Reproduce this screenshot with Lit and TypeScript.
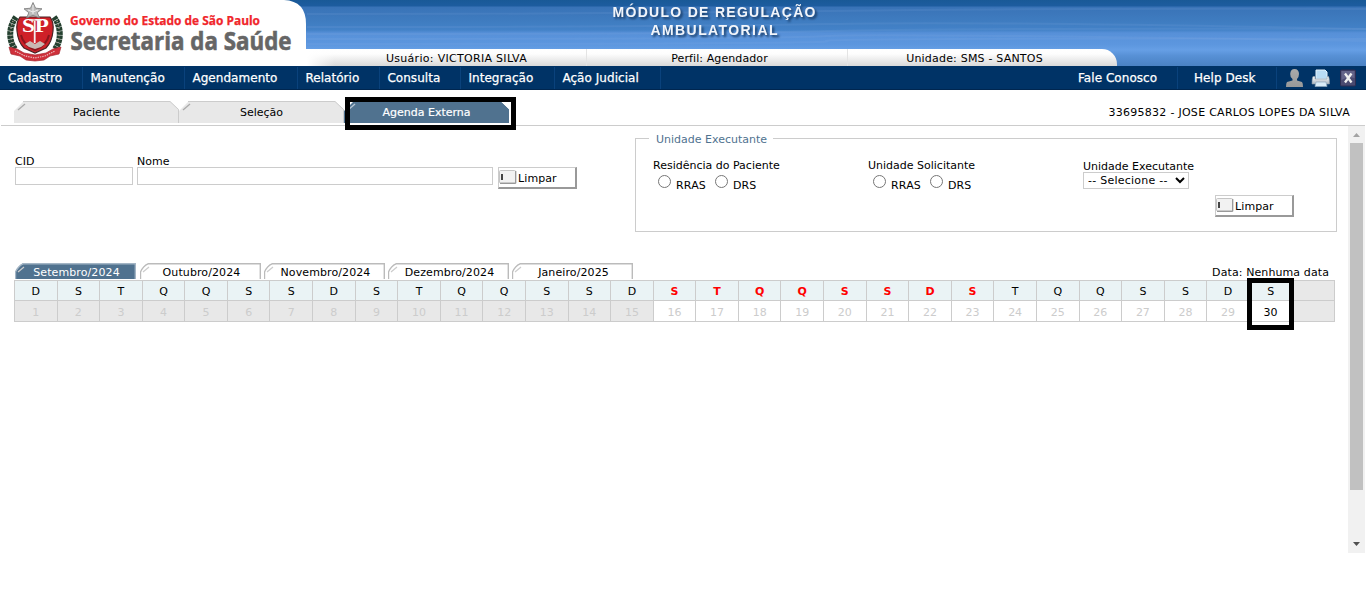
import { LitElement, html, svg, css } from "lit";
import { customElement } from "lit/decorators.js";
import { classMap } from "lit/directives/class-map.js";

@customElement("state-logo")
export class StateLogo extends LitElement {
  static styles = css`
    :host { display: block; width: 307px; height: 66px; }
    svg { display: block; overflow: visible; }
    .gov { font: 700 12px "Open Sans", sans-serif; fill: #f0262b; stroke: #f0262b; stroke-width: 0.25px; }
    .sec { font: 700 25px "Open Sans", sans-serif; fill: #666; stroke: #666; stroke-width: 0.6px; }
    .sp { font: 700 19px "Liberation Serif", serif; fill: #fff; }
  `;
  render() {
    return html`<svg width="307" height="66" viewBox="0 0 307 66">
      <path d="M0 0H284Q306 1 306 24V49H307V66H0Z" fill="#fff" />
      <g fill="none">
        <path d="M16 17C9 26 8 40 15 49" stroke="#24402f" stroke-width="6" stroke-dasharray="3.4 .5" />
        <path d="M54 17C61 26 62 40 55 49" stroke="#24402f" stroke-width="6" stroke-dasharray="3.4 .5" />
        <path d="M13 21C10 28 10 36 13 44M57 21C60 28 60 36 57 44" stroke="#a9958b" stroke-width="1.4" stroke-dasharray="1 2.6" />
      </g>
      <path d="M20 17H50Q54 22 53 31Q52 42 46 48L35 53L24 48Q18 42 17 31Q16 22 20 17Z" fill="#cf2028" stroke="#4a2426" stroke-width="1.2" />
      <path d="M21 35Q23 45 35 50Q47 45 49 35" fill="none" stroke="#8b161d" stroke-width="2" />
      <path d="M25 44L30 41L35 44L40 41L45 44L41 47L35 49L29 47Z" fill="#c9b7b2" />
      <text class="sp" x="22" y="32" textLength="27" lengthAdjust="spacingAndGlyphs">SP</text>
      <path d="M34.7 21V43" stroke="#f3eeee" stroke-width="1.8" />
      <path d="M29 20H42" stroke="#eee" stroke-width="1.4" />
      <path d="M33 2.5L35.6 8.2L42 8.8L37.3 12.7L39.5 18L33 15.3L26.6 18L28.8 12.7L24 8.8L30.5 8.2Z" fill="#bbb" stroke="#777" stroke-width=".8" />
      <path d="M33 5V14M28 10L33 12L38 10" stroke="#eee" stroke-width="1" fill="none" />
      <path d="M9 47L17 49L24 53L35 55L46 53L53 49L61 47L59 54L50 56L44 60L35 61L26 60L20 56L11 54Z" fill="#cf303b" stroke="#a62831" stroke-width=".7" />
      <path d="M15 51L25 56L35 58L45 56L55 51" stroke="#e9b9ba" stroke-width="1.2" stroke-dasharray="1.4 1" fill="none" />
      <text class="gov" x="70" y="24.5" textLength="190" lengthAdjust="spacingAndGlyphs">Governo do Estado de São Paulo</text>
      <text class="sec" x="70.5" y="50" textLength="221" lengthAdjust="spacingAndGlyphs">Secretaria da Saúde</text>
    </svg>`;
  }
}

@customElement("clear-button")
export class ClearButton extends LitElement {
  static styles = css`
    :host { display: block; }
    button { box-sizing: border-box; display: flex; width: 79px; height: 22px; padding: 2px 0 0 0; margin: 0;
      background: #fff; border: 1px solid #ccc; border-right: 2px solid #999; border-bottom: 2px solid #999;
      font: 11px/16px "DejaVu Sans", sans-serif; color: #000; text-align: left; letter-spacing: 0.1px; }
    .glyph { width: 18px; height: 14px; margin-right: 1px; }
    span { line-height: 17px; }
  `;
  render() {
    return html`<button>
      <svg class="glyph" viewBox="0 0 18 14">
        <rect x=".5" y=".5" width="16" height="12.5" rx="1" fill="#f2f2f2" stroke="#c5c5c5" />
        <path d="M1 13.3H16.8V1" fill="none" stroke="#888" />
        <rect x="2" y="4" width="2" height="6" fill="#444" />
      </svg><span>Limpar</span></button>`;
  }
}

@customElement("page-tab")
export class PageTab extends LitElement {
  static properties = { active: { type: Boolean }, width: { type: Number } };
  active = false;
  width = 165;
  static styles = css`
    :host { display: block; height: 22px; }
    .tab { display: grid; height: 22px; }
    svg, span { grid-area: 1 / 1; }
    span { text-align: center; font: 11px/24px "DejaVu Sans", sans-serif; color: #000; }
    .on { color: #fff; -webkit-text-stroke: 0.2px #fff; }
  `;
  render() {
    const w = this.width;
    return html`<div class="tab">
      <svg width=${w} height="22">
        <path d="M0 22V10L10 0H${w - 9}L${w} 8.5V22Z" fill=${this.active ? "#50728f" : "#e8e8e8"} />
        <path d="M9 .5H${w - 9}L${w - 0.5} 8.5V22" fill="none" stroke=${this.active ? "#50728f" : "#ccc"} />
        <path d="M4 9L11 3" stroke=${this.active ? "#b7c6d4" : "#aaa"} stroke-width="1.3" />
      </svg>
      <span class=${classMap({ on: this.active })}><slot></slot></span>
    </div>`;
  }
}

const MENU: [string, number][] = [["Cadastro", 83], ["Manutenção", 102], ["Agendamento", 113], ["Relatório", 82], ["Consulta", 81], ["Integração", 94], ["Ação Judicial", 106]];
const MONTHS = ["Setembro/2024", "Outubro/2024", "Novembro/2024", "Dezembro/2024", "Janeiro/2025"];
const WEEK = ["D", "S", "T", "Q", "Q", "S", "S"];
const RED_DAYS = [16, 17, 18, 19, 20, 21, 22, 23];

@customElement("app-root")
export class AppRoot extends LitElement {
  static properties = { month: { state: true } };
  month = 0;

  static styles = css`
    :host { display: block; width: 1366px; height: 592px; overflow: hidden; background: #fff; color: #000; font: 11px/14px "DejaVu Sans", sans-serif; }
    * { box-sizing: border-box; }
    .header { display: grid; grid-template-columns: 307px 1fr; height: 66px;
      background: linear-gradient(#195997 0, #1d5c9f 6px, #3973b7 7px, #3f7cc0 21px, #4382c8 30px, #5790d8 33px, #5d97df 45px, #669fe5 50px, #5790d5 56px, #4a82c4 66px); }
    .banner { display: flex; flex-direction: column; height: 66px; }
    .title { display: block; height: 49px; }
    .title text { font: 700 14px "Liberation Sans", sans-serif; fill: #f2f5fa; filter: drop-shadow(2px 2px 1px #173b66); }
    .streak { stroke: #93b9e8; stroke-width: 2; opacity: .12; fill: none; }
    .info { display: flex; width: 810px; height: 17px; background: linear-gradient(to right, #fff 0, #fff0 28px), linear-gradient(#fff 0, #fdfdfd 5px, #d9d9d9 17px); border-radius: 0 15px 0 0; line-height: 19px; text-align: center; }
    .user { width: 280px; padding-left: 20px; border-right: 1px solid #e4e4e4; letter-spacing: 0.3px; }
    .profile { width: 261px; padding-left: 5px; border-right: 1px solid #e4e4e4; letter-spacing: 0.1px; }
    .unit { width: 253px; letter-spacing: 0.2px; }
    .menu { display: flex; height: 24px; background: #036; border-bottom: 1px solid #00264f; color: #fff; font-size: 12px; -webkit-text-stroke: 0.25px #fff; }
    .item { flex: none; padding-left: 7.4px; border-right: 1px solid #0a427c; margin-top: 1px; line-height: 22px; letter-spacing: 0.05px; }
    .item:first-child { padding-left: 8px; }
    .spacer { flex: 1; }
    .contact { width: 108px; padding-left: 8px; }
    .help { width: 99px; padding-left: 16px; }
    .tools { width: 89px; display: block; }
    .tabs { display: flex; height: 36px; margin: 0 1px; padding: 11px 15px 0 13px; border-bottom: 1px solid #ccc; }
    .patient { margin-left: auto; line-height: 23px; letter-spacing: 0.28px; }
    .view { display: flex; height: 427px; }
    .body { width: 1348px; padding: 0 11px 0 14px; }
    .filters { display: flex; height: 137px; }
    .search { display: flex; width: 621px; padding: 29px 0 0 1px; align-items: flex-start; }
    .field { display: flex; flex-direction: column; line-height: 14px; margin-right: 4px; }
    .field input { width: 100%; height: 18px; border: 1px solid #ccc; padding: 0; margin: -2px 0 0; }
    .cid { width: 118px; }
    .nome { width: 356px; margin-right: 5px; }
    .search clear-button { margin-top: 12px; }
    fieldset { display: block; width: 702px; height: 100px; min-width: 0; margin: 6px 0 0; padding: 26px 0 0 17px; border: 1px solid #ccc; }
    legend { height: 12px; margin-left: -4px; margin-bottom: -20px; padding: 0 6px 0 7px; color: #50728f; line-height: 16px; }
    .units { display: grid; grid-template-columns: 215px 215px 1fr; }
    .radios { display: flex; height: 19px; }
    .radios input { width: 13px; height: 13px; margin: 2px 5px 0 5px; }
    .radios label { display: flex; line-height: 25px; letter-spacing: 0.15px; }
    .radios label + label { margin-left: 4px; }
    .executor { padding-top: 1px; }
    select { display: block; width: 106px; height: 17px; margin-top: -2px; padding: 0 2px 0 0; border: 1px solid #ccc; border-radius: 0; background: #fff; color: #000; font: 11px "DejaVu Sans", sans-serif; letter-spacing: 0.25px; }
    .clear { padding: 3px 0 0 562px; }
    .months { display: flex; height: 17px; padding-left: 1px; gap: 3px; }
    .month { display: grid; width: 121px; height: 17px; }
    .month:first-child { margin-right: 1px; }
    .month svg, .month span { grid-area: 1 / 1; }
    .month span { text-align: center; padding-left: 2px; line-height: 19px; letter-spacing: 0.1px; }
    .month .on { color: #fff; }
    .date { margin-left: auto; margin-right: 8px; line-height: 19px; letter-spacing: 0.1px; }
    .calendar { display: grid; grid-template-columns: repeat(31, 1fr); grid-template-rows: 20px 21px; width: 1321px; border-left: 1px solid #ccc; border-top: 1px solid #ccc; }
    .cell { border-right: 1px solid #ccc; border-bottom: 1px solid #ccc; text-align: center; background: #fff; }
    .head { background: #eaf3f5; height: 20px; line-height: 21px; }
    .red { color: #f00; font-weight: 700; }
    .day { height: 21px; line-height: 23px; color: #ccc; }
    .past, .blank { background: #e8e8e8; }
    .open { color: #000; }
    .mark { position: absolute; border: 5px solid #000; pointer-events: none; }
    .mark-tab { left: 345px; top: 97px; width: 171px; height: 33px; }
    .mark-day { left: 1247px; top: 278px; width: 47px; height: 52px; }
    .scroll { width: 17px; height: 427px; }
    .scroll svg { display: block; }
  `;

  private monthTab(name: string, i: number) {
    const on = this.month === i;
    return html`<div class="month" @click=${() => (this.month = i)}>
      <svg width="121" height="17">
        <path d="M0 16V9L8 0H121V16Z" fill=${on ? "#50728f" : "#fff"} />
        <path d="M.5 16V9Q3 3 8 .8H120.3V16" fill="none" stroke=${on ? "#a3b5c5" : "#bbb"} stroke-width="1.4" />
        <path d="M3 9L9 4" stroke="#ccc" stroke-width="1.2" />
      </svg><span class=${classMap({ on })}>${name}</span></div>`;
  }

  private radios(group: string) {
    return html`<div class="radios">
      <label><input type="radio" name=${group} />RRAS</label>
      <label><input type="radio" name=${group} />DRS</label></div>`;
  }

  render() {
    const days = Array.from({ length: 31 }, (_, i) => i + 1);
    return html`
      <div class="header">
        <state-logo></state-logo>
        <div class="banner">
          <svg class="title" width="1059" height="49">
            ${[11, 24, 31, 36, 41].map((y, i) => svg`<path class="streak" d="M0 ${y + 3}Q${300 + i * 60} ${y + 3} 520 ${y}T1059 ${y + (i % 2 ? 5 : -2)}" />`)}
            <text x="305.5" y="17" textLength="203">MÓDULO DE REGULAÇÃO</text>
            <text x="343.5" y="35" textLength="127">AMBULATORIAL</text>
          </svg>
          <div class="info">
            <div class="user">Usuário: VICTORIA SILVA</div>
            <div class="profile">Perfil: Agendador</div>
            <div class="unit">Unidade: SMS - SANTOS</div>
          </div>
        </div>
      </div>
      <div class="menu">
        ${MENU.map(([label, width]) => html`<div class="item" style="width:${width}px">${label}</div>`)}
        <div class="spacer"></div>
        <div class="item contact">Fale Conosco</div>
        <div class="item help">Help Desk</div>
        <svg class="tools" width="89" height="23">
          <defs>
            <linearGradient id="g" x2="0" y2="1"><stop stop-color="#aaa" /><stop offset="1" stop-color="#999" /></linearGradient>
            <linearGradient id="p" x2="0" y2="1"><stop stop-color="#fff" /><stop offset="1" stop-color="#a9b4bf" /></linearGradient>
          </defs>
          <path d="M17.5 3C20.5 3 22 5 22 8Q22 11 20 13V14.5L25 16Q26 17 26 21H9Q9 17 10 16L15.5 14.5V13Q13 11 13.2 8Q13.5 3 17.5 3Z" fill="url(#g)" />
          <path d="M39 4H48L50 6V13H39Z" fill="#b9dcf5" stroke="#e3f2fc" />
          <path d="M36 10.5Q35 12 35 18H52.5Q52.5 12 51.5 10.5H50V13H38V10.5Z" fill="url(#p)" stroke="#8f9caa" stroke-width=".6" />
          <path d="M39 16H49L50 20.5H38Z" fill="#d9ebf7" stroke="#8da7bd" stroke-width=".7" />
          <rect x="63.5" y="4" width="15" height="16" rx="1" fill="#4a4a70" stroke="#2c2c50" />
          <path d="M64.5 5H77.5V12Q71 10 64.5 14Z" fill="#77779a" opacity=".6" />
          <path d="M68 7.5L74.5 16.5M74.5 7.5L68 16.5" stroke="#eee" stroke-width="2.3" />
        </svg>
      </div>
      <div class="tabs">
        <page-tab .width=${165}>Paciente</page-tab>
        <page-tab .width=${165}>Seleção</page-tab>
        <page-tab .width=${165} .active=${true}>Agenda Externa</page-tab>
        <div class="patient">33695832 - JOSE CARLOS LOPES DA SILVA</div>
      </div>
      <div class="view">
        <div class="body">
          <div class="filters">
            <div class="search">
              <label class="field cid">CID<input /></label>
              <label class="field nome">Nome<input /></label>
              <clear-button></clear-button>
            </div>
            <fieldset>
              <legend>Unidade Executante</legend>
              <div class="units">
                <div>Residência do Paciente${this.radios("residencia")}</div>
                <div>Unidade Solicitante${this.radios("solicitante")}</div>
                <div class="executor">Unidade Executante<select><option>-- Selecione --</option></select></div>
              </div>
              <div class="clear"><clear-button></clear-button></div>
            </fieldset>
          </div>
          <div class="months">
            ${MONTHS.map((m, i) => this.monthTab(m, i))}
            <div class="date">Data: Nenhuma data</div>
          </div>
          <div class="calendar">
            ${days.map((d) => html`<div class="cell head ${classMap({ red: RED_DAYS.includes(d), blank: d > 30 })}">${d > 30 ? "" : WEEK[(d - 1) % 7]}</div>`)}
            ${days.map((d) => html`<div class="cell day ${classMap({ past: d < 16, blank: d > 30, open: d === 30 })}">${d > 30 ? "" : d}</div>`)}
          </div>
        </div>
        <div class="scroll">
          <svg width="17" height="427">
            <rect width="17" height="427" fill="#f1f1f1" />
            <rect x="2" y="17" width="13" height="347" fill="#c1c1c1" />
            <path d="M5 11L8.5 7L12 11Z" fill="#a3a3a3" />
            <path d="M5 416L8.5 420L12 416Z" fill="#505050" />
          </svg>
        </div>
      </div>
      <div class="mark mark-tab"></div>
      <div class="mark mark-day"></div>
    `;
  }
}
